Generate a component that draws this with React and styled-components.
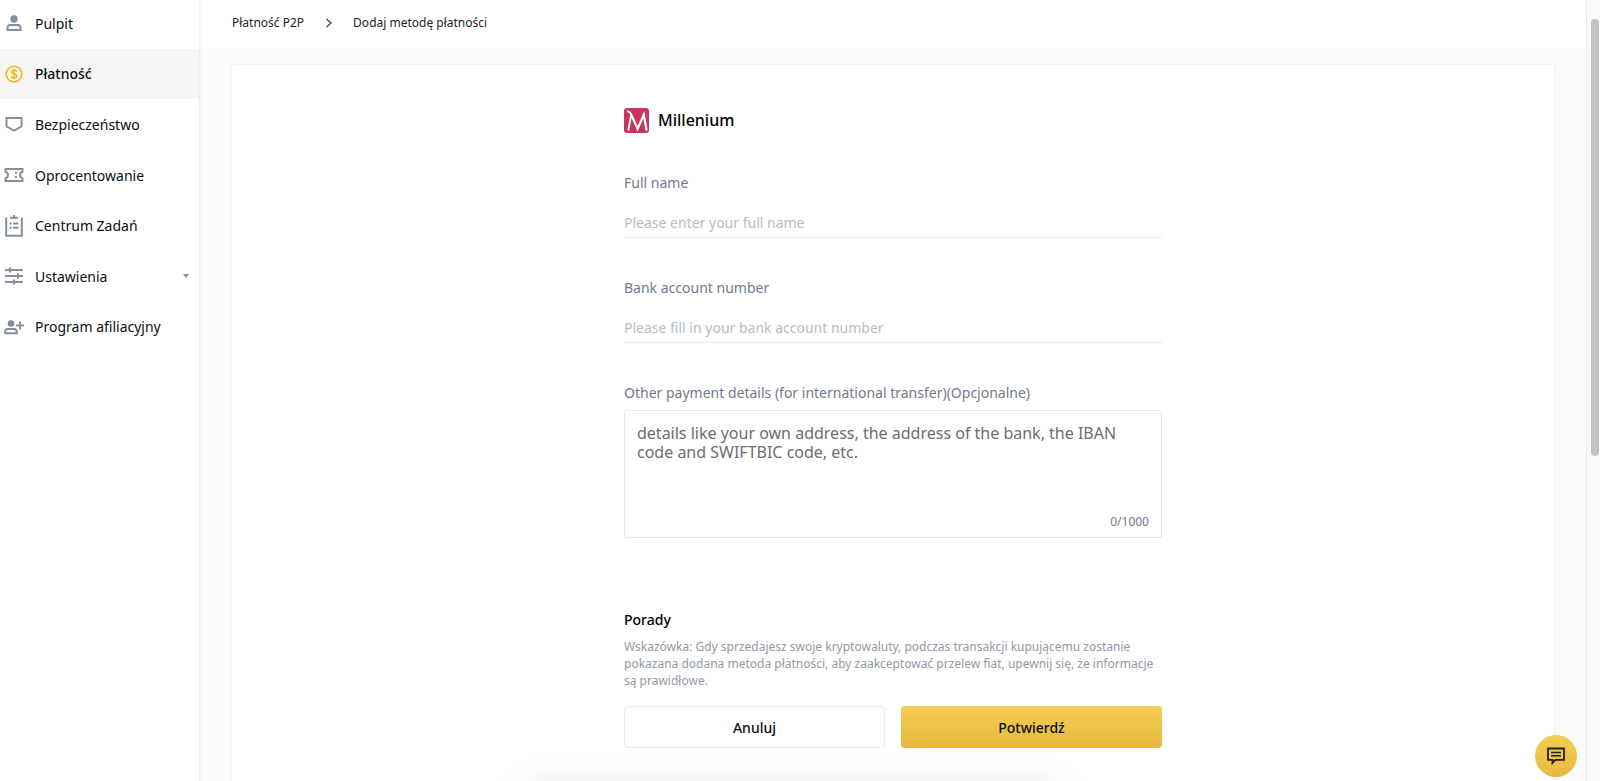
import React, { useState } from 'react';
import styled, { createGlobalStyle } from 'styled-components';

const GlobalStyle = createGlobalStyle`
  * {
    box-sizing: border-box;
  }

  body {
    margin: 0;
    background-color: #fafafa;
    color: #1e2329;
    font-family: 'Noto Sans', 'Open Sans', sans-serif;
    font-size: 14px;
  }

  button, input, textarea {
    font-family: inherit;
  }
`;

// Sidebar icons
const UserIcon = () => (
  <svg width="18" height="18" viewBox="0 0 18 18" aria-hidden="true">
    <circle cx="9" cy="5" r="3.7" fill="currentColor" />
    <path d="M2.500 16v-2.500A2.500 2.500 0 0 1 5 11h8a2.500 2.500 0 0 1 2.500 2.500V16z" fill="none" stroke="currentColor" strokeWidth="2" />
  </svg>
);

const PaymentIcon = () => (
  <svg width="18" height="18" viewBox="0 0 18 18" fill="none" stroke="currentColor" aria-hidden="true">
    <circle cx="9" cy="9" r="7.8" strokeWidth="1.6" />
    <path d="M11.6 6.6C11.2 5.7 10.300 5.200 9 5.200c-1.500 0-2.500.7-2.500 1.800 0 2.700 5.200 1.200 5.200 4 0 1.200-1.100 1.900-2.700 1.900-1.500 0-2.500-.6-2.900-1.700M9 3.700v10.600" strokeWidth="1.500" />
  </svg>
);

const ShieldIcon = () => (
  <svg width="18" height="18" viewBox="0 0 18 18" fill="none" stroke="currentColor" strokeWidth="2" aria-hidden="true">
    <path d="M1.500 3h15v8.500L9 15.700l-7.500-4.200z" />
  </svg>
);

const TicketIcon = () => (
  <svg width="20" height="18" viewBox="0 0 20 18" aria-hidden="true">
    <path d="M1.500 3h17v2.800a3.300 3.300 0 0 0 0 6.400V15h-17v-2.800a3.300 3.300 0 0 0 0-6.400z" fill="none" stroke="currentColor" strokeWidth="2" />
    <path d="M11 5.800h2v2h-2zM11 10h2v2h-2z" fill="currentColor" />
  </svg>
);

const TasksIcon = () => (
  <svg width="18" height="22" viewBox="0 0 18 22" aria-hidden="true">
    <path d="M1.200 2.500v18.300h15.600V2.500" fill="none" stroke="currentColor" strokeWidth="2" />
    <path d="M8 0h2v1.800h3v2H5v-2h3zM4.600 7.500h2v2h-2zM8 7.500h5.400v2H8zM4.600 11.800h2v2h-2zM8 11.800h5.400v2H8z" fill="currentColor" />
  </svg>
);

const SettingsIcon = () => (
  <svg width="18" height="18" viewBox="0 0 18 18" fill="none" stroke="currentColor" strokeWidth="2" aria-hidden="true">
    <path d="M0 3h18M0 9h18M0 15h18M5 .5v5M13 6.500v5M9 12.500v5" />
  </svg>
);

const AffiliateIcon = () => (
  <svg width="20" height="18" viewBox="0 0 20 18" aria-hidden="true">
    <circle cx="7" cy="5.500" r="3.300" fill="currentColor" />
    <path d="M1.200 15.300v-1.500a2.800 2.800 0 0 1 2.800-2.800h6a2.800 2.800 0 0 1 2.800 2.800v1.500z" fill="none" stroke="currentColor" strokeWidth="2" />
    <path d="M16 3.500v8M12 7.500h8" stroke="currentColor" strokeWidth="2" />
  </svg>
);

const ChatIcon = () => (
  <svg width="20" height="20" viewBox="0 0 20 20" fill="none" stroke="currentColor" aria-hidden="true">
    <path d="M2 2.500h16v11.300h-8.500L6.500 17v-3.200H2z" strokeWidth="1.800" />
    <path d="M5 6.500h10M5 9.800h10" strokeWidth="1.500" />
  </svg>
);

const BankLogo = () => (
  <svg width="25" height="25" viewBox="0 0 25 25" aria-hidden="true">
    <rect width="25" height="25" rx="3" fill="#c9345a" />
    <path d="M3 3.200c2 .3 3.800 1.500 4.200 3.600L4.300 22.500" fill="none" stroke="#fff" strokeWidth="1.800" />
    <path d="M6.800 5.800l6.800 15L19.800 6.800l2.800 15.700" fill="none" stroke="#fff" strokeWidth="2.200" />
  </svg>
);

const navItems = [
  { title: 'Pulpit', icon: <UserIcon />, link: '#pulpit' },
  { title: 'Płatność', icon: <PaymentIcon />, link: '#platnosc', active: true },
  { title: 'Bezpieczeństwo', icon: <ShieldIcon />, link: '#bezpieczenstwo' },
  { title: 'Oprocentowanie', icon: <TicketIcon />, link: '#oprocentowanie' },
  { title: 'Centrum Zadań', icon: <TasksIcon />, link: '#zadania' },
  { title: 'Ustawienia', icon: <SettingsIcon />, link: '#ustawienia', expandable: true },
  { title: 'Program afiliacyjny', icon: <AffiliateIcon />, link: '#afiliacja' },
];

const MAX_DETAILS = 1000;

const App = () => {
  const [fullName, setFullName] = useState('');
  const [account, setAccount] = useState('');
  const [details, setDetails] = useState('');

  return (
    <>
      <GlobalStyle />
      <Page>
        <Sidebar>
          <Nav>
            {navItems.map((item) => (
              <NavItem key={item.title} href={item.link} $active={item.active}>
                <NavIcon $active={item.active}>{item.icon}</NavIcon>
                <NavLabel>{item.title}</NavLabel>
                {item.expandable && <Caret />}
              </NavItem>
            ))}
          </Nav>
        </Sidebar>

        <Main>
          <Breadcrumbs aria-label="Breadcrumb">
            <Crumb href="#p2p">Płatność P2P</Crumb>
            <svg width="9" height="10" viewBox="0 0 9 10" fill="none" stroke="#474d57" strokeWidth="1.500" aria-hidden="true">
              <path d="M2.500 1l4.500 4-4.500 4" />
            </svg>
            <Crumb href="#dodaj">Dodaj metodę płatności</Crumb>
          </Breadcrumbs>

          <Card>
            <Form onSubmit={(e) => e.preventDefault()}>
              <BankTitle>
                <BankLogo />
                Millenium
              </BankTitle>

              <Field>
                <Label htmlFor="fullName">Full name</Label>
                <Input
                  id="fullName"
                  type="text"
                  placeholder="Please enter your full name"
                  value={fullName}
                  onChange={(e) => setFullName(e.target.value)}
                />
              </Field>

              <Field>
                <Label htmlFor="account">Bank account number</Label>
                <Input
                  id="account"
                  type="text"
                  placeholder="Please fill in your bank account number"
                  value={account}
                  onChange={(e) => setAccount(e.target.value)}
                />
              </Field>

              <Field>
                <Label htmlFor="details">Other payment details (for international transfer)(Opcjonalne)</Label>
                <DetailsBox>
                  <Details
                    id="details"
                    rows={4}
                    maxLength={MAX_DETAILS}
                    placeholder="details like your own address, the address of the bank, the IBAN code and SWIFTBIC code, etc."
                    value={details}
                    onChange={(e) => setDetails(e.target.value)}
                  />
                  <Counter>{details.length}/{MAX_DETAILS}</Counter>
                </DetailsBox>
              </Field>

              <TipsTitle>Porady</TipsTitle>
              <Tips>
                Wskazówka: Gdy sprzedajesz swoje kryptowaluty, podczas transakcji kupującemu zostanie
                pokazana dodana metoda płatności, aby zaakceptować przelew fiat, upewnij się, że informacje
                są prawidłowe.
              </Tips>

              <Actions>
                <Button type="button">Anuluj</Button>
                <Button type="submit" $primary>Potwierdź</Button>
              </Actions>
            </Form>
          </Card>
        </Main>

        <ScrollTrack>
          <ScrollThumb />
        </ScrollTrack>
      </Page>

      <BottomShade />
      <ChatButton type="button" aria-label="Chat">
        <ChatIcon />
      </ChatButton>
    </>
  );
};

export default App;

// Styled Components
const Page = styled.div`
  display: flex;
  height: 100vh;
  overflow: hidden;
`;

const Sidebar = styled.aside`
  flex: 0 0 199px;
  background-color: #fff;
  box-shadow: 0 0 4px rgba(0, 0, 0, 0.12);
  z-index: 1;
`;

const Nav = styled.nav`
  display: flex;
  flex-direction: column;
  min-height: 354px;
  margin-top: -2px;
`;

const NavItem = styled.a`
  flex: 1 0 50px;
  display: flex;
  align-items: center;
  gap: 11px;
  padding: 0 10px 0 4px;
  color: #0b0e11;
  font-weight: ${({ $active }) => ($active ? 500 : 400)};
  text-decoration: none;
  background-color: ${({ $active }) => ($active ? '#f5f5f5' : 'transparent')};
`;

const NavIcon = styled.span`
  display: flex;
  justify-content: center;
  width: 20px;
  color: ${({ $active }) => ($active ? '#f0b90b' : '#848e9c')};
`;

const NavLabel = styled.span`
  flex: 1;
`;

const Caret = styled.span`
  border: 3px solid transparent;
  border-top: 4px solid #848e9c;
  border-bottom: 0;
`;

const Main = styled.main`
  flex: 1;
  display: flex;
  flex-direction: column;
  min-width: 0;
`;

const Breadcrumbs = styled.nav`
  flex: none;
  display: flex;
  align-items: center;
  gap: 20px;
  height: 48px;
  padding: 0 33px 3px;
  background-color: #fff;
`;

const Crumb = styled.a`
  color: #1e2329;
  font-size: 12px;
  text-decoration: none;
`;

const Card = styled.section`
  flex: 1;
  margin: 17px 32px 0 33px;
  padding: 40px 24px;
  background-color: #fff;
  border-radius: 4px;
  box-shadow: 0 0 2px rgba(0, 0, 0, 0.1);
`;

const Form = styled.form`
  max-width: 538px;
  margin: 0 auto;
`;

const BankTitle = styled.h1`
  display: flex;
  align-items: center;
  gap: 9px;
  margin: 2px 0 40px;
  color: #000;
  font-size: 16px;
  font-weight: 500;
  line-height: 26px;
`;

const Field = styled.div`
  display: flex;
  flex-direction: column;
  margin-bottom: 40px;
`;

const Label = styled.label`
  color: #707a8a;
  line-height: 20px;
`;

const Input = styled.input`
  height: 45px;
  padding: 20px 0 6px;
  border: none;
  border-bottom: 1px solid #eaecef;
  background: transparent;
  color: #1e2329;
  font-size: 14px;
  outline: none;

  &::placeholder {
    color: #b7bdc6;
  }

  &:focus {
    border-color: #f0b90b;
  }
`;

const DetailsBox = styled.div`
  display: flex;
  flex-direction: column;
  margin-top: 7px;
  padding: 13px 12px 6px;
  border: 1px solid #e6e8ea;
  border-radius: 2px;

  &:focus-within {
    border-color: #f0b90b;
  }
`;

const Details = styled.textarea`
  padding: 0;
  border: none;
  background: transparent;
  color: #1e2329;
  font-size: 16px;
  line-height: 19px;
  resize: none;
  outline: none;

  &::placeholder {
    color: #6a6e76;
  }
`;

const Counter = styled.span`
  align-self: flex-end;
  margin-top: 13px;
  color: #707a8a;
  font-size: 12px;
  line-height: 18px;
`;

const TipsTitle = styled.h2`
  margin: 72px 0 8px;
  color: #000;
  font-size: 14px;
  font-weight: 500;
  line-height: 20px;
`;

const Tips = styled.p`
  margin: 0 0 17px;
  color: #929aa5;
  font-size: 12px;
  line-height: 17px;
`;

const Actions = styled.div`
  display: grid;
  grid-template-columns: 1fr 1fr;
  gap: 16px;
`;

const Button = styled.button`
  height: 42px;
  border: ${({ $primary }) => ($primary ? 'none' : '1px solid #eaecef')};
  border-radius: 4px;
  background: ${({ $primary }) => ($primary ? 'linear-gradient(#f4ce51, #e8b83f)' : '#fff')};
  color: #0b0e11;
  font-size: 14px;
  font-weight: 500;
  cursor: pointer;
`;

const ScrollTrack = styled.div`
  flex: 0 0 14px;
  padding: 19px 1px 0 4px;
  background-color: #fafafa;
  border-left: 1px solid #ebebeb;
`;

const ScrollThumb = styled.div`
  height: 56vh;
  border-radius: 4px;
  background-color: #c1c3c2;
`;

/* soft shadow rising from the lower edge of the window */
const BottomShade = styled.div`
  position: fixed;
  left: 33%;
  right: 34%;
  bottom: -48px;
  height: 40px;
  box-shadow: 0 0 36px rgba(0, 0, 0, 0.15);
  pointer-events: none;
`;

const ChatButton = styled.button`
  position: fixed;
  right: 23px;
  bottom: 4px;
  z-index: 2;
  display: flex;
  align-items: center;
  justify-content: center;
  width: 42px;
  height: 42px;
  padding: 0;
  border: none;
  border-radius: 50%;
  background: linear-gradient(#f4ce51, #e8b83f);
  color: #1e2329;
  cursor: pointer;
`;
